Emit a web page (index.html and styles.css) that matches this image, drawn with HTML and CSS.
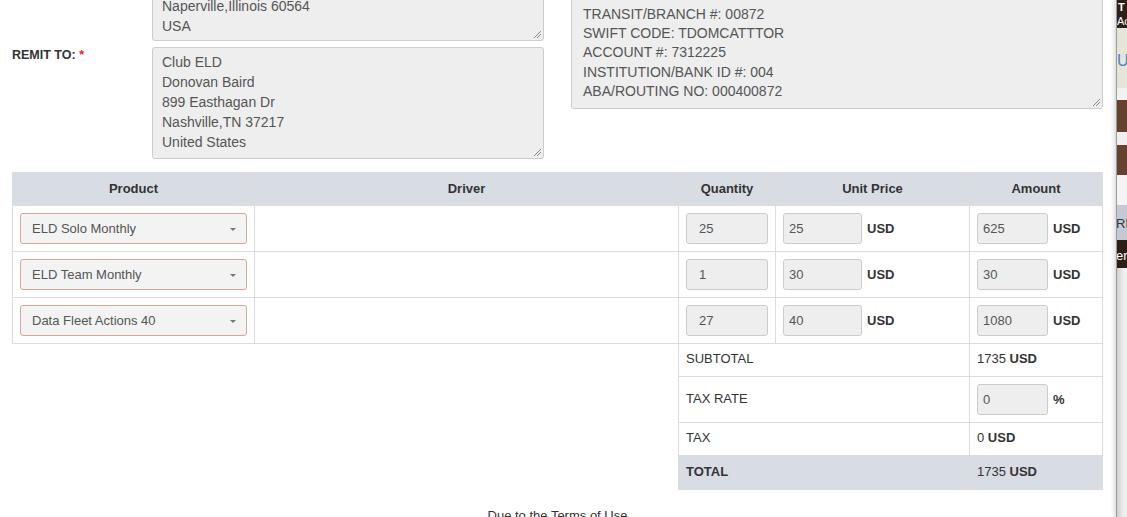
FILE: index.html
```html
<!DOCTYPE html>
<html>
<head>
<meta charset="utf-8">
<link rel="stylesheet" href="styles.css">
</head>
<body>
<div class="page">
  <div class="top">
    <div class="left-col">
      <div class="field">
        <div class="label"></div>
        <div class="ta ta-left ta-first">Fleet Logistics Inc<br>Mark Peterson<br>1200 Diehl Rd<br>Naperville,Illinois 60564<br>USA</div>
      </div>
      <div class="field">
        <div class="label">REMIT TO: <span class="req">*</span></div>
        <div class="ta ta-left">Club ELD<br>Donovan Baird<br>899 Easthagan Dr<br>Nashville,TN 37217<br>United States</div>
      </div>
    </div>
    <div class="right-col">
      <div class="ta ta-right">BANK: TD CANADA TRUST<br>BENEFICIARY: CLUB ELD<br>CURRENCY: USD<br>TRANSIT/BRANCH #: 00872<br>SWIFT CODE: TDOMCATTTOR<br>ACCOUNT #: 7312225<br>INSTITUTION/BANK ID #: 004<br>ABA/ROUTING NO: 000400872</div>
    </div>
  </div>

  <table class="items">
    <colgroup>
      <col class="c-product"><col class="c-driver"><col class="c-qty"><col class="c-unit"><col class="c-amount">
    </colgroup>
    <thead>
      <tr><th>Product</th><th>Driver</th><th>Quantity</th><th>Unit Price</th><th>Amount</th></tr>
    </thead>
    <tbody>
      <tr>
        <td><div class="select">ELD Solo Monthly<span class="caret"></span></div></td>
        <td></td>
        <td><div class="inp inp-qty">25</div></td>
        <td><div class="money"><div class="inp inp-unit">25</div><b>USD</b></div></td>
        <td><div class="money"><div class="inp inp-amt">625</div><b>USD</b></div></td>
      </tr>
      <tr>
        <td><div class="select">ELD Team Monthly<span class="caret"></span></div></td>
        <td></td>
        <td><div class="inp inp-qty">1</div></td>
        <td><div class="money"><div class="inp inp-unit">30</div><b>USD</b></div></td>
        <td><div class="money"><div class="inp inp-amt">30</div><b>USD</b></div></td>
      </tr>
      <tr>
        <td><div class="select">Data Fleet Actions 40<span class="caret"></span></div></td>
        <td></td>
        <td><div class="inp inp-qty">27</div></td>
        <td><div class="money"><div class="inp inp-unit">40</div><b>USD</b></div></td>
        <td><div class="money"><div class="inp inp-amt">1080</div><b>USD</b></div></td>
      </tr>
      <tr class="sum">
        <td class="blank" colspan="2"></td>
        <td class="slabel" colspan="2">SUBTOTAL</td>
        <td class="sval">1735 <b>USD</b></td>
      </tr>
      <tr class="sum rate">
        <td class="blank" colspan="2"></td>
        <td class="slabel" colspan="2">TAX RATE</td>
        <td class="sval"><div class="money"><div class="inp inp-amt">0</div><b class="pct">%</b></div></td>
      </tr>
      <tr class="sum">
        <td class="blank" colspan="2"></td>
        <td class="slabel" colspan="2">TAX</td>
        <td class="sval">0 <b>USD</b></td>
      </tr>
      <tr class="sum total">
        <td class="blank" colspan="2"></td>
        <td class="slabel" colspan="2"><b>TOTAL</b></td>
        <td class="sval">1735 <b>USD</b></td>
      </tr>
    </tbody>
  </table>

  <p class="terms">Due to the Terms of Use</p>
</div>

<div class="side-panel">
  <div class="sp sp-dark"><span class="sp-t">T</span><span class="sp-a">Ac</span></div>
  <div class="sp sp-beige"><span class="sp-u">U</span></div>
  <div class="sp sp-white1"></div>
  <div class="sp sp-brown1"></div>
  <div class="sp sp-white2"></div>
  <div class="sp sp-brown2"></div>
  <div class="sp sp-white3"></div>
  <div class="sp sp-blue"><span class="sp-re">RE</span></div>
  <div class="sp sp-dark2"><span class="sp-er">er</span></div>
  <div class="sp sp-rest"></div>
</div>
</body>
</html>
```

FILE: styles.css
```css
* { box-sizing: border-box; }
html, body { margin: 0; padding: 0; background: #fff; }
body {
  font-family: "Liberation Sans", Arial, sans-serif;
  color: #333;
  overflow: hidden;
  height: 517px;
}
.page {
  padding: 0 24px 0 12px;
}
.top {
  display: flex;
  margin-top: -71px;
}
.left-col {
  width: 532px;
  display: flex;
  flex-direction: column;
  gap: 6px;
}
.field {
  display: flex;
}
.label {
  width: 140px;
  flex: none;
  font-size: 12.5px;
  font-weight: bold;
  color: #333;
  padding-top: 1px;
}
.req { color: #e0262b; }
.ta {
  position: relative;
  background: #eee;
  border: 1px solid #ccc;
  border-radius: 3px;
  color: #555;
  font-size: 14px;
  overflow: hidden;
}
.ta::after {
  content: "";
  position: absolute;
  right: 2px;
  bottom: 2px;
  width: 7px;
  height: 7px;
  background: linear-gradient(135deg, transparent 0 45%, #888 45% 52%, transparent 52% 70%, #888 70% 77%, transparent 77%);
}
.ta-left {
  width: 392px;
  height: 112px;
  padding: 3.5px 9px;
  line-height: 20.2px;
}
.ta-first {
  padding-top: 5px;
}
.right-col {
  margin-left: 27px;
  flex: 1;
}
.ta-right {
  margin-top: 13px;
  height: 167px;
  padding: 4px 11px;
  line-height: 19.3px;
}

.items {
  margin-top: 13px;
  width: 1090px;
  border-collapse: collapse;
  table-layout: fixed;
  font-size: 13px;
}
.c-product { width: 242px; }
.c-driver { width: 424px; }
.c-qty { width: 97px; }
.c-unit { width: 194px; }
.c-amount { width: 133px; }
.items th {
  background: #d8dde3;
  border: 1px solid #dcdcdc;
  font-weight: bold;
  color: #333;
  padding: 8px 7px 8px;
  line-height: 16px;
  text-align: center;
}
.items td {
  border: 1px solid #dcdcdc;
  padding: 7px 7px;
  vertical-align: top;
}
.select {
  position: relative;
  height: 31px;
  border: 1px solid #d4a896;
  border-radius: 3px;
  background: #f3f3f3;
  color: #555;
  padding: 6px 11px;
  line-height: 17px;
}
.caret {
  position: absolute;
  right: 10px;
  top: 14px;
  width: 0;
  height: 0;
  border-left: 3px solid transparent;
  border-right: 3px solid transparent;
  border-top: 3px solid #777;
}
.inp {
  height: 31px;
  background: #eee;
  border: 1px solid #ccc;
  border-radius: 3px;
  color: #555;
  line-height: 17px;
  padding: 6px 5px;
}
.inp-qty { width: 82px; padding-left: 12px; }
.inp-unit { width: 79px; }
.inp-amt { width: 71px; }
.money {
  display: flex;
  align-items: center;
  gap: 5px;
}
.money b { font-weight: bold; color: #333; }
.pct { font-weight: bold; }
.items td.blank {
  border: none;
}
.items tr.sum td.slabel,
.items tr.sum td.sval {
  vertical-align: middle;
  padding: 6px 7px 8px;
  line-height: 18px;
  color: #333;
}
.items tr.rate td.sval { padding: 7px 7px; }
.items tr.total td.slabel,
.items tr.total td.sval {
  background: #d8dde3;
  padding: 7px 7px 8px;
}
.sval b { font-weight: bold; }

.terms {
  margin: 18px 0 0;
  text-align: center;
  font-size: 13px;
  color: #333;
}

.side-panel {
  position: fixed;
  top: 0;
  right: 0;
  width: 10px;
  height: 517px;
  display: flex;
  flex-direction: column;
  overflow: hidden;
  font-family: "Liberation Sans", Arial, sans-serif;
  font-size: 12px;
  box-shadow: -1px 0 0 #9a9a9a, -3px 0 4px rgba(0,0,0,0.15);
}
.sp { flex: none; position: relative; white-space: nowrap; }
.sp-dark { height: 28px; background: #2f1f19; color: #fff; }
.sp-t { position: absolute; left: 1px; top: 1px; font-weight: bold; font-size: 11px; }
.sp-a { position: absolute; left: 0; top: 15px; font-size: 11px; }
.sp-beige { height: 60px; background: #e7e4da; }
.sp-u { position: absolute; left: 0; top: 24px; color: #4a86c6; font-size: 16px; }
.sp-white1 { height: 12px; background: #f2f2f2; }
.sp-brown1 { height: 32px; background: #64422f; }
.sp-white2 { height: 13px; background: #f0efee; }
.sp-brown2 { height: 30px; background: #64422f; }
.sp-white3 { height: 30px; background: #f4f4f4; }
.sp-blue { height: 35px; background: #c4c9d3; }
.sp-re { position: absolute; left: -1px; top: 11px; color: #334; font-size: 13px; }
.sp-dark2 { height: 28px; background: #2c1f18; }
.sp-er { position: absolute; left: -1px; top: 8px; color: #fff; font-size: 13px; }
.sp-rest { flex: 1; background: linear-gradient(90deg, #cfcfcf, #ececec 60%, #f2f2f2); }
```
